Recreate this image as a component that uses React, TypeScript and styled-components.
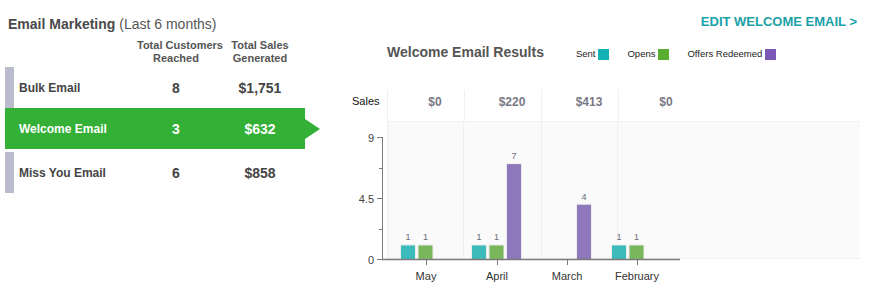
import styled, { createGlobalStyle } from 'styled-components';

const GlobalStyle = createGlobalStyle`
    body {
        margin: 0;
        background: #fff;
        font-family: 'Liberation Sans', Arial, sans-serif;
    }
`;

type Campaign = {
    name: string;
    customers: number;
    sales: string;
    active?: boolean;
};

type MonthResult = {
    month: string;
    sales: string;
    sent: number;
    opens: number;
    offers: number;
};

const campaigns: Campaign[] = [
    { name: 'Bulk Email', customers: 8, sales: '$1,751' },
    { name: 'Welcome Email', customers: 3, sales: '$632', active: true },
    { name: 'Miss You Email', customers: 6, sales: '$858' }
];

const results: MonthResult[] = [
    { month: 'May', sales: '$0', sent: 1, opens: 1, offers: 0 },
    { month: 'April', sales: '$220', sent: 1, opens: 1, offers: 7 },
    { month: 'March', sales: '$413', sent: 0, opens: 0, offers: 4 },
    { month: 'February', sales: '$0', sent: 1, opens: 1, offers: 0 }
];

const series = [
    { key: 'sent', label: 'Sent', swatch: '#13b1b1', bar: '#3dbbbb', offset: -25 },
    { key: 'opens', label: 'Opens', swatch: '#5aad2f', bar: '#7ab65c', offset: -7.5 },
    { key: 'offers', label: 'Offers Redeemed', swatch: '#7a58b8', bar: '#8f77bb', offset: 10 }
] as const;

// chart geometry (svg coords, origin at the y-axis label gutter)
const BASE_Y = 137;
const TOP_Y = 15;
const MAX = 9;
const AXIS_X = 42;
const GROUP_X = [86, 157, 227, 297];
const unit = (BASE_Y - TOP_Y) / MAX;

const ResultsChart = () => (
    <svg width={520} height={160} viewBox="0 0 520 160">
        <rect x={47} y={0} width={473} height={136} fill="#fafafa" />
        <line x1={47} y1={136.5} x2={520} y2={136.5} stroke="#f0f0f0" />
        {[47.5, 123.5, 201.5, 277.5].map((x) => (
            <line key={x} x1={x} y1={0} x2={x} y2={136} stroke="#efefef" />
        ))}

        {/* y axis */}
        <line x1={AXIS_X + 0.5} y1={TOP_Y} x2={AXIS_X + 0.5} y2={BASE_Y} stroke="#7a7a7a" />
        {[0, 2.25, 4.5, 6.75, 9].map((v) => {
            const y = Math.round(BASE_Y - v * unit) + 0.5;
            const major = v % 4.5 === 0;
            return (
                <g key={v}>
                    <line x1={major ? AXIS_X - 5 : AXIS_X - 3} y1={y} x2={AXIS_X} y2={y} stroke="#7a7a7a" />
                    {major && (
                        <text x={34} y={y + 4} textAnchor="end" fontSize={11} fill="#444">
                            {v}
                        </text>
                    )}
                </g>
            );
        })}

        {/* bars */}
        {results.map((r, i) =>
            series.map((s) => {
                const value = r[s.key];
                if (!value) return null;
                const h = value * unit;
                const x = GROUP_X[i] + s.offset;
                return (
                    <g key={r.month + s.key}>
                        <rect x={x - 1} y={BASE_Y - h - 1} width={16} height={h + 1} fill="#ececec" />
                        <rect x={x} y={BASE_Y - h} width={14} height={h} fill={s.bar} />
                        <text x={x + 7} y={BASE_Y - h - 5} textAnchor="middle" fontSize={9} fill="#6b6b78">
                            {value}
                        </text>
                    </g>
                );
            })
        )}

        {/* x axis */}
        <line x1={AXIS_X} y1={BASE_Y + 0.5} x2={340} y2={BASE_Y + 0.5} stroke="#7a7a7a" strokeWidth={1.5} />
        {results.map((r, i) => (
            <g key={r.month}>
                <line x1={GROUP_X[i] + 0.5} y1={BASE_Y} x2={GROUP_X[i] + 0.5} y2={BASE_Y + 6} stroke="#7a7a7a" />
                <text x={GROUP_X[i]} y={158} textAnchor="middle" fontSize={11} fill="#333">
                    {r.month}
                </text>
            </g>
        ))}
    </svg>
);

const App = () => {
    return (
        <>
            <GlobalStyle />
            <Page>
                <LeftPanel>
                    <Title>
                        Email Marketing <Light>(Last 6 months)</Light>
                    </Title>
                    <ColumnHeader>
                        <span />
                        <HeaderCell>{'Total Customers\nReached'}</HeaderCell>
                        <HeaderCell>{'Total Sales\nGenerated'}</HeaderCell>
                    </ColumnHeader>
                    <Rows>
                        {campaigns.map((c) => (
                            <Row key={c.name} $active={!!c.active}>
                                <RowName>{c.name}</RowName>
                                <RowValue>{c.customers}</RowValue>
                                <RowValue>{c.sales}</RowValue>
                            </Row>
                        ))}
                    </Rows>
                </LeftPanel>

                <RightPanel>
                    <EditRow>
                        <EditLink href="#">EDIT WELCOME EMAIL &gt;</EditLink>
                    </EditRow>
                    <TitleRow>
                        <ChartTitle>Welcome Email Results</ChartTitle>
                        <Legend>
                            {series.map((s) => (
                                <LegendItem key={s.key}>
                                    {s.label}
                                    <Swatch $color={s.swatch} />
                                </LegendItem>
                            ))}
                        </Legend>
                    </TitleRow>
                    <SalesRow>
                        <SalesLabel>Sales</SalesLabel>
                        <SalesCells>
                            {results.map((r) => (
                                <SalesCell key={r.month}>{r.sales}</SalesCell>
                            ))}
                        </SalesCells>
                    </SalesRow>
                    <ResultsChart />
                </RightPanel>
            </Page>
        </>
    );
};

export default App;

const Page = styled.div`
    display: flex;
    width: 872px;
    height: 282px;
    overflow: hidden;
`;

const LeftPanel = styled.section`
    width: 330px;
    flex-shrink: 0;
    padding-top: 15px;
    box-sizing: border-box;
`;

const Title = styled.h1`
    margin: 0 0 0 8px;
    font-size: 14px;
    line-height: 18px;
    font-weight: bold;
    color: #4a4a4a;
`;

const Light = styled.span`
    font-weight: normal;
    color: #555;
`;

const ColumnHeader = styled.div`
    display: grid;
    grid-template-columns: 132px 78px 90px;
    margin: 6px 0 0 5px;
`;

const HeaderCell = styled.div`
    font-size: 11px;
    line-height: 13px;
    font-weight: bold;
    color: #555;
    text-align: center;
    white-space: pre;
`;

const Rows = styled.div`
    display: flex;
    flex-direction: column;
    gap: 3px;
    margin: 2px 0 0 5px;
    width: 300px;
`;

const Row = styled.div<{ $active: boolean }>`
    position: relative;
    display: grid;
    grid-template-columns: 123px 78px 90px;
    align-items: center;
    height: 41px;
    box-sizing: border-box;
    border-left: 9px solid #bbbbce;
    color: #444;

    ${({ $active }) =>
        $active &&
        `
        margin-top: -3px;
        border-left: 9px solid #33b035;
        background: #33b035;
        color: #fff;

        &::after {
            content: '';
            position: absolute;
            left: 100%;
            top: 50%;
            transform: translateY(-50%);
            border-left: 15px solid #33b035;
            border-top: 10px solid transparent;
            border-bottom: 10px solid transparent;
        }
    `}
`;

const RowName = styled.div`
    padding-left: 5px;
    font-size: 12px;
    font-weight: bold;
`;

const RowValue = styled.div`
    font-size: 14px;
    font-weight: bold;
    text-align: center;
`;

const RightPanel = styled.section`
    flex: 1;
    display: flex;
    flex-direction: column;
    padding: 14px 12px 0 10px;
`;

const EditRow = styled.div`
    display: flex;
    justify-content: flex-end;
    margin-right: 3px;
    line-height: 16px;
`;

const EditLink = styled.a`
    font-size: 13px;
    font-weight: bold;
    color: #1aa2a9;
    text-decoration: none;
`;

const TitleRow = styled.div`
    display: flex;
    align-items: baseline;
    margin-top: 13px;
    padding-left: 47px;
`;

const ChartTitle = styled.h2`
    margin: 0;
    font-size: 14px;
    line-height: 18px;
    font-weight: bold;
    color: #555;
`;

const Legend = styled.div`
    display: flex;
    align-items: baseline;
    gap: 18px;
    margin-left: 32px;
`;

const LegendItem = styled.div`
    display: flex;
    align-items: center;
    gap: 3px;
    font-size: 9.5px;
    line-height: 12px;
    color: #222;
`;

const Swatch = styled.span<{ $color: string }>`
    width: 11px;
    height: 11px;
    background: ${({ $color }) => $color};
`;

const SalesRow = styled.div`
    display: flex;
    margin-top: 29px;
    height: 32px;
`;

const SalesLabel = styled.div`
    width: 47px;
    padding: 5px 0 0 12px;
    box-sizing: border-box;
    font-size: 11px;
    color: #111;
`;

const SalesCells = styled.div`
    flex: 1;
    display: flex;
    border-bottom: 1px solid #f0f0f0;
`;

const SalesCell = styled.div`
    width: 77px;
    box-sizing: border-box;
    padding: 5px 0 0 18px;
    border-left: 1px solid #f0f0f0;
    text-align: center;
    font-size: 12px;
    font-weight: bold;
    color: #787884;
`;
